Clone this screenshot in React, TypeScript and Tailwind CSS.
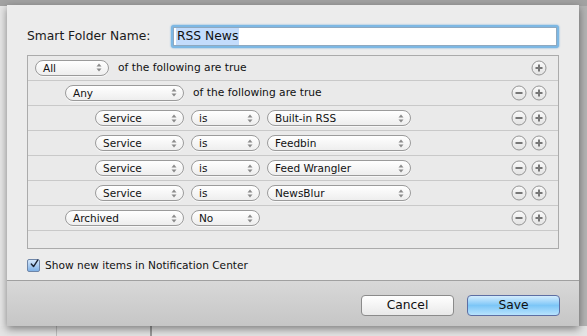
import React from "react";

const font = { fontFamily: '"DejaVu Sans", "Liberation Sans", sans-serif' };

function Stepper() {
  return (
    <svg width="6" height="9" viewBox="0 0 6 9" className="shrink-0">
      <path d="M3 0.5 L5.5 3.5 L0.5 3.5 Z" fill="#8a8a8a" />
      <path d="M3 8.5 L5.5 5.5 L0.5 5.5 Z" fill="#8a8a8a" />
    </svg>
  );
}

function Popup({ label, w }: { label: string; w: string }) {
  return (
    <div
      className={`${w} h-[16px] shrink-0 rounded-full border border-[#9b9b9b] bg-gradient-to-b from-[#ffffff] to-[#eeeeee] flex items-center justify-between pl-[7px] pr-[6px] text-[10.5px] text-[#111] leading-none shadow-[0_1px_0_rgba(255,255,255,0.6)]`}
    >
      <span>{label}</span>
      <Stepper />
    </div>
  );
}

function RoundBtn({ kind }: { kind: "plus" | "minus" }) {
  return (
    <svg width="16" height="16" viewBox="0 0 16 16" className="shrink-0">
      <defs>
        <linearGradient id={`g-${kind}`} x1="0" y1="0" x2="0" y2="1">
          <stop offset="0" stopColor="#fafafa" />
          <stop offset="1" stopColor="#e2e2e2" />
        </linearGradient>
      </defs>
      <circle cx="8" cy="8" r="7" fill={`url(#g-${kind})`} stroke="#959595" strokeWidth="1" />
      <rect x="4.5" y="7" width="7" height="2" fill="#777" />
      {kind === "plus" && <rect x="7" y="4.5" width="2" height="7" fill="#777" />}
    </svg>
  );
}

function Row({
  indent,
  children,
  minus = true,
}: {
  indent: string;
  children: React.ReactNode;
  minus?: boolean;
}) {
  return (
    <div className="h-[25px] border-b border-[#c9c9c9] flex items-center pr-[11px]">
      <div className={`${indent} flex items-center gap-[7px] flex-1`}>{children}</div>
      <div className="flex items-center gap-[4px]">
        {minus && <RoundBtn kind="minus" />}
        <RoundBtn kind="plus" />
      </div>
    </div>
  );
}

export default function App() {
  return (
    <div className="w-[587px] h-[336px] overflow-hidden bg-[#b3b3b3] relative" style={font}>
      {/* background window bits */}
      <div className="absolute left-0 top-0 w-[587px] h-[6px] bg-[#a2a2a2]" />
      <div className="absolute left-0 top-[6px] w-[8px] h-[330px] bg-[#e6e6e6]" />
      <div className="absolute left-0 top-[326px] w-[587px] h-[10px] bg-[#e4e4e4]" />
      <div className="absolute left-[150px] top-[326px] w-[2px] h-[10px] bg-[#9a9a9a]" />
      <div className="absolute left-[56px] top-[326px] w-[1px] h-[10px] bg-[#bdbdbd]" />

      {/* sheet */}
      <div className="absolute left-[7px] top-[5px] w-[572px] h-[321px] flex flex-col shadow-[0_3px_8px_rgba(0,0,0,0.45)]">
        <div className="h-[275px] bg-[#ececec] flex flex-col px-[20px]">
          <div className="flex items-center mt-[20px] h-[23px]">
            <div className="text-[12.3px] text-[#1a1a1a] w-[144px]">Smart Folder Name:</div>
            <div className="flex-1 h-[23px] rounded-[3px] bg-[#7db8e4] p-[2px] shadow-[0_0_2px_#5da3da]">
              <div className="h-full bg-white border border-[#8fa9c0] flex items-center pl-[2px]">
                <span className="bg-[#c3dcfc] text-[12.3px] text-[#111] px-[1px] leading-[17px]">RSS News</span>
              </div>
            </div>
          </div>

          <div className="mt-[7px] h-[194px] border border-[#ababab] bg-[#eaeaea] flex flex-col">
            <Row indent="pl-[7px]" minus={false}>
              <Popup label="All" w="w-[74px]" />
              <span className="text-[10.7px] text-[#111] ml-[2px]">of the following are true</span>
            </Row>
            <Row indent="pl-[37px]">
              <Popup label="Any" w="w-[119px]" />
              <span className="text-[10.7px] text-[#111] ml-[2px]">of the following are true</span>
            </Row>
            {["Built-in RSS", "Feedbin", "Feed Wrangler", "NewsBlur"].map((v) => (
              <Row indent="pl-[67px]" key={v}>
                <Popup label="Service" w="w-[89px]" />
                <Popup label="is" w="w-[69px]" />
                <Popup label={v} w="w-[144px]" />
              </Row>
            ))}
            <Row indent="pl-[37px]">
              <Popup label="Archived" w="w-[119px]" />
              <Popup label="No" w="w-[69px]" />
            </Row>
          </div>

          <div className="mt-[9px] flex items-center gap-[5px]">
            <div className="w-[13px] h-[13px] rounded-[2px] border border-[#6f86a8] bg-gradient-to-b from-[#d6e8fb] to-[#7fb1e6] flex items-center justify-center">
              <svg width="14" height="14" viewBox="0 0 14 14" className="-mt-[3px] ml-[2px]">
                <path d="M2 7 L5.5 11 L12 1" fill="none" stroke="#1c2433" strokeWidth="2.2" strokeLinecap="round" strokeLinejoin="round" />
              </svg>
            </div>
            <span className="text-[10.6px] text-[#111]">Show new items in Notification Center</span>
          </div>
        </div>
        <div className="flex-1 border-t border-[#a0a0a0] bg-gradient-to-b from-[#d8d8d8] to-[#c6c6c6] flex items-start justify-end pr-[19px] pt-[14px] gap-[13px]">
          <div className="w-[93px] h-[21px] rounded-[4px] border border-[#8b8b8b] bg-gradient-to-b from-[#ffffff] to-[#e9e9e9] flex items-center justify-center text-[12.3px] text-[#111]">
            Cancel
          </div>
          <div className="w-[93px] h-[21px] rounded-[4px] border border-[#5d6ea3] bg-gradient-to-b from-[#d3ecfd] via-[#7cc6f7] to-[#b8e3fd] flex items-center justify-center text-[12.3px] text-[#111]">
            Save
          </div>
        </div>
      </div>
    </div>
  );
}
